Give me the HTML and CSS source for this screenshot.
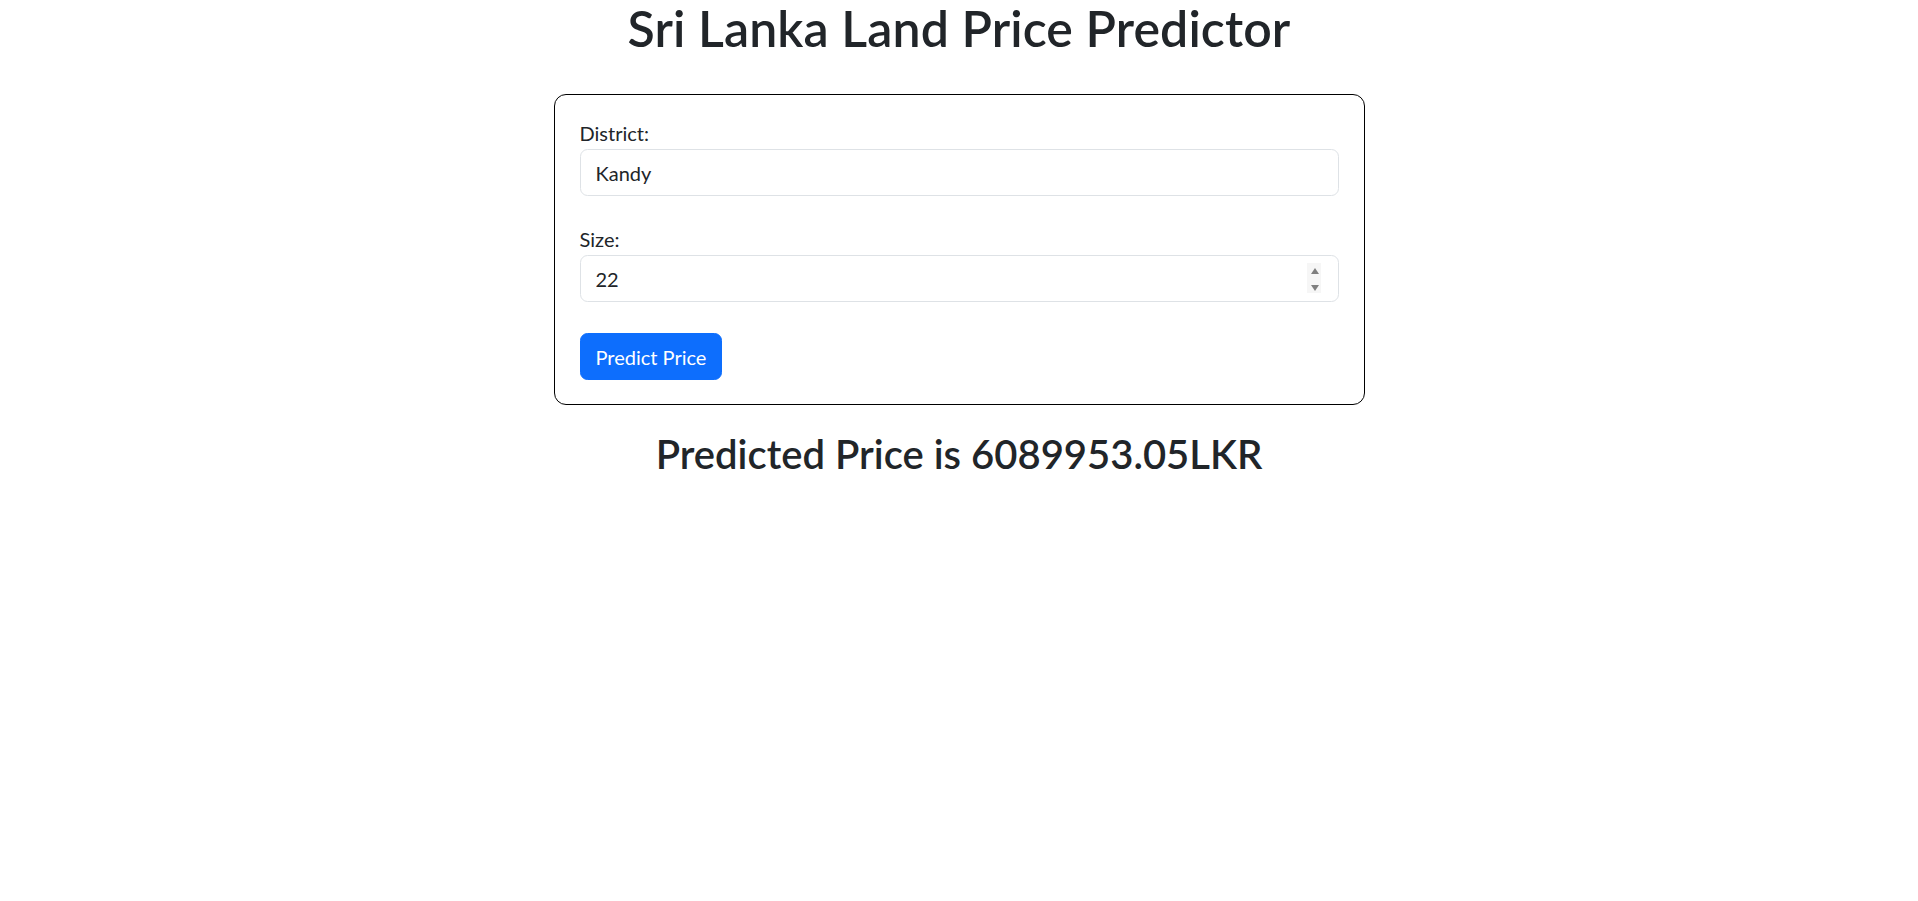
FILE: index.html
```html
<!DOCTYPE html>
<html lang="en">
<head>
<meta charset="utf-8">
<title>Sri Lanka Land Price Predictor</title>
<link rel="stylesheet" href="styles.css">
</head>
<body>
<main class="page">
  <h1 class="title">Sri Lanka Land Price Predictor</h1>
  <form class="card">
    <label class="label" for="district">District:</label>
    <input class="field" id="district" type="text" value="Kandy">
    <label class="label label-gap" for="size">Size:</label>
    <div class="field-wrap">
      <input class="field field-number" id="size" type="number" value="22">
      <span class="spinner" aria-hidden="true">
        <svg width="14" height="30" viewBox="0 0 14 30">
          <path d="M4 11 L8 5 L12 11 Z" fill="#7f7f7f"/>
          <path d="M4 22 L12 22 L8 28 Z" fill="#7f7f7f"/>
        </svg>
      </span>
    </div>
    <button class="btn" type="button">Predict Price</button>
  </form>
  <h2 class="result">Predicted Price is 6089953.05LKR</h2>
</main>
</body>
</html>
```
FILE: styles.css
```css
* { box-sizing: border-box; }
html, body { margin: 0; padding: 0; background: #fff; }
body {
  font-family: "Lato", "Liberation Sans", sans-serif;
  color: #212529;
  font-size: 20px;
  line-height: 30px;
}
.page {
  display: flex;
  flex-direction: column;
  align-items: center;
}
.title {
  margin: 0 0 38px 0;
  font-size: 50px;
  line-height: 56px;
  font-weight: 600;
  letter-spacing: 0.1px;
  text-align: center;
}
.card {
  width: 811px;
  border: 1px solid #000;
  border-radius: 12px;
  padding: 23px 25px 24px 25px;
  display: flex;
  flex-direction: column;
  align-items: flex-start;
}
.label {
  display: block;
  margin-bottom: 1px;
  font-size: 20px;
  line-height: 30px;
}
.label-gap { margin-top: 28px; }
.field-wrap {
  position: relative;
  width: 100%;
}
.field {
  display: block;
  width: 100%;
  height: 47px;
  padding: 0 15px;
  font-family: inherit;
  font-size: 20px;
  color: #212529;
  background: #fff;
  border: 1px solid #dee2e6;
  border-radius: 7.5px;
  outline: none;
}
.field-number { -moz-appearance: textfield; appearance: textfield; }
.field-number::-webkit-inner-spin-button,
.field-number::-webkit-outer-spin-button { -webkit-appearance: none; margin: 0; }
.spinner {
  position: absolute;
  left: 727px;
  top: 8px;
  width: 14px;
  height: 30px;
  background: #f6f6f6;
  display: flex;
}
.btn {
  margin-top: 31px;
  height: 47px;
  padding: 0 15px;
  font-family: inherit;
  font-size: 20px;
  color: #fff;
  background: #0d6efd;
  border: 1px solid #0d6efd;
  border-radius: 7.5px;
}
.result {
  margin: 25px 0 0 0;
  font-size: 40px;
  line-height: 48px;
  font-weight: 600;
  text-align: center;
}
```
